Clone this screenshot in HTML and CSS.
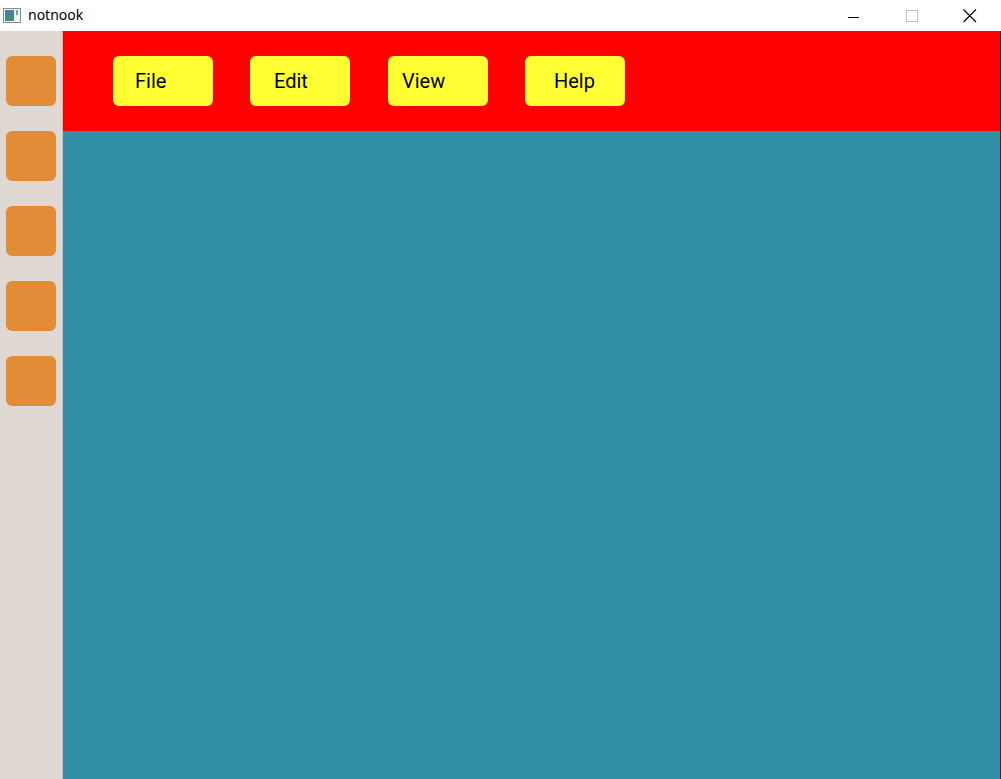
FILE: index.html
```html
<!DOCTYPE html>
<html lang="en">
<head>
<meta charset="utf-8">
<title>notnook</title>
<link rel="stylesheet" href="styles.css">
</head>
<body>
<div class="window">
  <div class="titlebar">
    <div class="app-title">
      <svg class="app-icon" width="18" height="15" viewBox="0 0 18 15">
        <rect x="0.5" y="0.5" width="17" height="14" fill="#f4f4f4" stroke="#8a8a8a"/>
        <rect x="2" y="2" width="9" height="11" fill="#3f8f7c"/>
        <rect x="2" y="2" width="9" height="5" fill="#4d7fa6"/>
        <rect x="13" y="2" width="2" height="5" fill="#6fa6a0"/>
      </svg>
      <span class="app-name">notnook</span>
    </div>
    <div class="controls">
      <svg class="ctl ctl-min" width="12" height="12" viewBox="0 0 12 12"><path d="M0 6.5H11" stroke="#000" stroke-width="1"/></svg>
      <svg class="ctl ctl-max" width="12" height="12" viewBox="0 0 12 12"><rect x="0.5" y="0.5" width="11" height="11" fill="none" stroke="#c4c4c4"/></svg>
      <svg class="ctl ctl-close" width="14" height="14" viewBox="0 0 14 14"><path d="M0.5 0.5L13 13M13 0.5L0.5 13" stroke="#000" stroke-width="1.1"/></svg>
    </div>
  </div>
  <div class="body">
    <aside class="sidebar">
      <div class="side-btn"></div>
      <div class="side-btn"></div>
      <div class="side-btn"></div>
      <div class="side-btn"></div>
      <div class="side-btn"></div>
    </aside>
    <main class="main">
      <header class="menubar">
        <div class="menu-btn menu-file">File</div>
        <div class="menu-btn menu-edit">Edit</div>
        <div class="menu-btn menu-view">View</div>
        <div class="menu-btn menu-help">Help</div>
      </header>
      <section class="content"></section>
    </main>
  </div>
</div>
</body>
</html>
```

FILE: styles.css
```css
html, body {
  margin: 0;
  padding: 0;
  width: 1001px;
  height: 779px;
  overflow: hidden;
  background: #ffffff;
}

.window {
  width: 1001px;
  height: 779px;
  display: flex;
  flex-direction: column;
}

.titlebar {
  height: 31px;
  flex: none;
  background: #ffffff;
  display: flex;
  align-items: center;
  justify-content: space-between;
}

.app-title {
  display: flex;
  align-items: center;
  padding-left: 3px;
  padding-bottom: 1px;
}

.app-icon {
  display: block;
}

.app-name {
  margin-left: 7px;
  font-family: "Noto Sans", "DejaVu Sans", sans-serif;
  font-size: 14px;
  color: #000000;
  line-height: 16px;
}

.controls {
  display: flex;
  align-items: center;
  padding-right: 24px;
}

.ctl {
  display: block;
}

.ctl-min {
  margin-right: 46px;
  margin-top: 2px;
}

.ctl-max {
  margin-right: 45px;
}

.body {
  flex: 1;
  display: flex;
  min-height: 0;
}

.sidebar {
  width: 63px;
  flex: none;
  background: #e0d8d3;
  border-right: 1px solid #d6b5b2;
  display: flex;
  flex-direction: column;
  align-items: flex-start;
  gap: 25px;
  padding: 25px 0 0 6px;
  box-sizing: border-box;
}

.side-btn {
  width: 50px;
  height: 50px;
  border-radius: 6px;
  background: #e38c37;
}

.main {
  flex: 1;
  display: flex;
  flex-direction: column;
  border-right: 1px solid #2b2b2b;
}

.menubar {
  height: 100px;
  flex: none;
  background: #ff0000;
  display: flex;
  align-items: flex-start;
  gap: 37px;
  padding: 25px 0 0 50px;
  box-sizing: border-box;
}

.menu-btn {
  width: 100px;
  height: 50px;
  box-sizing: border-box;
  border-radius: 6px;
  background: #ffff33;
  font-family: Roboto, "Liberation Sans", sans-serif;
  font-size: 20px;
  line-height: 50px;
  color: #000000;
}

.menu-file { padding-left: 22px; }
.menu-edit { padding-left: 24px; }
.menu-view { padding-left: 14px; margin-left: 1px; }
.menu-help { padding-left: 29px; }

.content {
  flex: 1;
  background: #318fa8;
}
```
